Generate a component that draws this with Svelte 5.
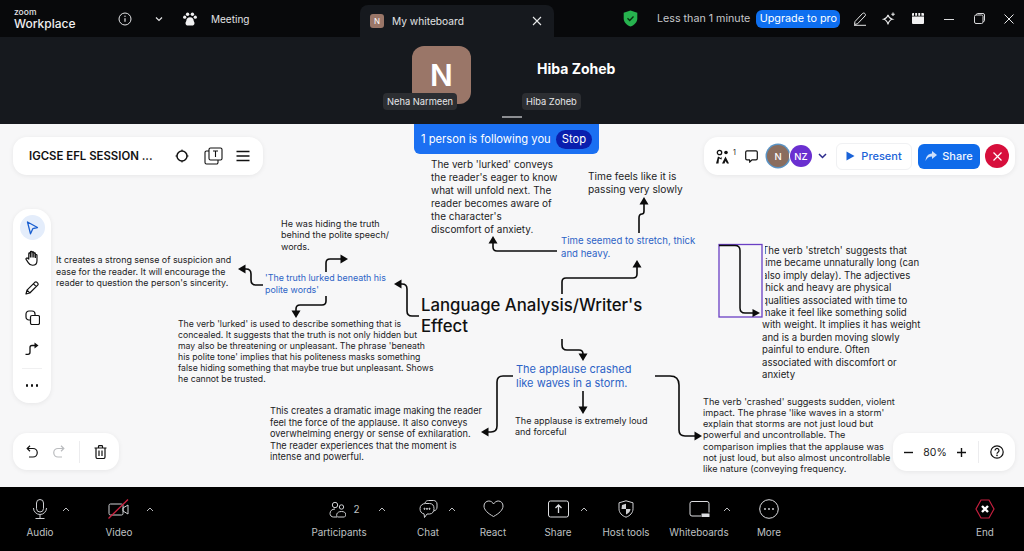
<script lang="ts">
  type Note = { x: number; y: number; size: number; lh: number; lines: string[]; blue?: boolean };

  // canvas notes: y is relative to the top of the whiteboard
  const notes: Note[] = [
    { x: 431, y: 34, size: 9.95, lh: 13, lines: ["The verb 'lurked' conveys", "the reader's eager to know", "what will unfold next. The", "reader becomes aware of", "the character's", "discomfort of anxiety."] },
    { x: 588, y: 46, size: 10.2, lh: 12.6, lines: ["Time feels like it is", "passing very slowly"] },
    { x: 561, y: 111, size: 9.6, lh: 12.6, blue: true, lines: ["Time seemed to stretch, thick", "and heavy."] },
    { x: 281, y: 94, size: 9, lh: 11.3, lines: ["He was hiding the truth", "behind the polite speech/", "words."] },
    { x: 56, y: 130, size: 8.9, lh: 11.5, lines: ["It creates a strong sense of suspicion and", "ease for the reader. It will encourage the", "reader to question the person's sincerity."] },
    { x: 265, y: 148, size: 8.9, lh: 12, blue: true, lines: ["'The truth lurked beneath his", "polite words'"] },
    { x: 178, y: 195, size: 8.7, lh: 11.1, lines: ["The verb 'lurked' is used to describe something that is", "concealed. It suggests that the truth is not only hidden but", "may also be threatening or unpleasant. The phrase 'beneath", "his polite tone' implies that his politeness masks something", "false hiding something that maybe true but unpleasant. Shows", "he cannot be trusted."] },
    { x: 516, y: 238, size: 11, lh: 14, blue: true, lines: ["The applause crashed", "like waves in a storm."] },
    { x: 515, y: 291, size: 9, lh: 11.3, lines: ["The applause is extremely loud", "and forceful"] },
    { x: 270, y: 281, size: 9.2, lh: 11.5, lines: ["This creates a dramatic image making the reader", "feel the force of the applause. It also conveys", "overwhelming energy or sense of exhilaration.", "The reader experiences that the moment is", "intense and powerful."] },
    { x: 703, y: 272, size: 9.15, lh: 11.15, lines: ["The verb 'crashed' suggests sudden, violent", "impact. The phrase 'like waves in a storm'", "explain that storms are not just loud but", "powerful and uncontrollable. The", "comparison implies that the applause was", "not just loud, but also almost uncontrollable", "like nature (conveying frequency."] },
    { x: 762, y: 121, size: 9.65, lh: 12.4, lines: ["The verb 'stretch' suggests that", "time became unnaturally long (can", "also imply delay). The adjectives", "thick and heavy are physical", "qualities associated with time to", "make it feel like something solid", "with weight. It implies it has weight", "and is a burden moving slowly", "painful to endure. Often", "associated with discomfort or", "anxiety"] },
  ];

  // arrows in page coordinates, tip is drawn separately as [x, y, direction]
  const arrows: string[] = [
    "M562 294V282Q562 278 566 278H633Q637 278 637 274V264",
    "M639 233V218Q639 214 642 214Q644 214 644 211V202",
    "M557 251H497Q493 251 493 247V241",
    "M419 316H412Q407 316 407 311V289Q407 284 402 284H398",
    "M562 339V345Q562 350 567 350H579Q583 350 583 354V356",
    "M513 376H503Q497 376 497 382V426Q497 432 491 432H486",
    "M583 391V409",
    "M655 376H670Q679 376 679 385V430Q679 436 685 436H697",
    "M263 285H256Q251 285 251 280V274Q251 269 246 269H243",
    "M326 272V263Q326 259 330 259H343",
    "M326 296V301Q326 305 322 305H300Q296 305 296 309V313",
  ];
  const tips: [number, number, number][] = [
    [637, 260, 0], [644, 197, 0], [493, 236, 0], [394, 284, -90], [583, 361, 180],
    [481, 432, -90], [583, 414, 180], [702, 436, 90], [238, 269, -90], [348, 259, 90], [296, 318, 180],
  ];

  const railTools = ["select", "hand", "pen", "shapes", "connector"];
</script>

<div class="app">
  <header class="titlebar">
    <div class="title-left">
      <div class="logo"><span class="logo-zoom">zoom</span><span class="logo-name">Workplace</span></div>
      <svg class="i-info" width="14" height="14" viewBox="0 0 14 14" fill="none" stroke="#e4e5e7" stroke-width="1"><circle cx="7" cy="7" r="6" /><path d="M7 6.2v3.6" stroke-width="1.2" /><circle cx="7" cy="4.2" r=".7" fill="#e4e5e7" stroke="none" /></svg>
      <svg class="i-chev" width="8" height="6" viewBox="0 0 8 6" fill="none" stroke="#e4e5e7" stroke-width="1.2"><path d="M1 1.5l3 3 3-3" /></svg>
      <svg class="i-paw" width="14" height="14" viewBox="0 0 14 14" fill="#f1f1f2"><circle cx="4.6" cy="2.2" r="1.7" /><circle cx="9.4" cy="2.2" r="1.7" /><circle cx="1.7" cy="5.2" r="1.6" /><circle cx="12.3" cy="5.2" r="1.6" /><path d="M7 5.2c2.2 0 3.6 1.5 3.6 3.4 0 .8.9 1.4.9 2.6 0 1.5-1.2 2.3-2.5 2.3H5c-1.3 0-2.5-.8-2.5-2.3 0-1.2.9-1.8.9-2.6 0-1.9 1.4-3.4 3.6-3.4z" /></svg>
      <span class="meeting">Meeting</span>
    </div>
    <div class="tab">
      <span class="tab-badge">N</span>
      <span class="tab-name">My whiteboard</span>
      <svg class="tab-x" width="10" height="10" viewBox="0 0 10 10" stroke="#e8e9ea" stroke-width="1.1"><path d="M1 1l8 8M9 1l-8 8" /></svg>
    </div>
    <div class="title-right">
      <svg class="i-shield" width="15" height="17" viewBox="0 0 15 17"><path d="M7.5 0.5l6.8 2.3v5.4c0 4-2.8 6.9-6.8 8.3C3.500 15.100.7 12.200.7 8.200V2.800z" fill="#27b34f" /><path d="M4.500 8.300l2.200 2.200 3.800-4" fill="none" stroke="#07300f" stroke-width="1.300" /></svg>
      <span class="timer">Less than 1 minute</span>
      <span class="upgrade">Upgrade to pro</span>
      <svg class="i-edit" width="14" height="14" viewBox="0 0 14 14" fill="none" stroke="#e8e9ea" stroke-width="1"><path d="M2 9.500L9.500 1.500c.8-.7 1.800-.5 2.400.1s.8 1.600.1 2.400L4.500 11.800l-3 .7zM1 13.300h12" /></svg>
      <svg class="i-spark" width="14" height="14" viewBox="0 0 14 14" fill="none" stroke="#e8e9ea" stroke-width="1.100"><path d="M6 2.800c.6 2.500 1.700 3.700 4.400 4.400C7.700 7.900 6.600 9.200 6 12.500 5.400 9.200 4.300 7.900 1.600 7.200 4.300 6.500 5.400 5.300 6 2.800z" /><path d="M11 .5v3.600M9.300 2.300h3.500" /></svg>
      <svg class="i-clap" width="12" height="11" viewBox="0 0 12 11" fill="#f1f1f2"><path d="M0 3.500h12V10a1 1 0 0 1-1 1H1a1 1 0 0 1-1-1zM0 1a1 1 0 0 1 1-1h1v2.800H0zM3.200 0h1.900v2.800H3.200zM6.300 0h1.900v2.800H6.300zM9.400 0H11a1 1 0 0 1 1 1v1.800H9.400z" /></svg>
      <svg class="i-min" width="10" height="10" viewBox="0 0 10 10" stroke="#d8d9db"><path d="M0 5.500h10" /></svg>
      <svg class="i-max" width="11" height="11" viewBox="0 0 11 11" fill="none" stroke="#d8d9db"><rect x=".5" y="2" width="8.500" height="8.500" rx="1.500" /><path d="M2.500 2V1.500A1 1 0 0 1 3.500.5H9A1.500 1.500 0 0 1 10.500 2v5.500a1 1 0 0 1-1 1H9" /></svg>
      <svg class="i-close" width="10" height="10" viewBox="0 0 10 10" stroke="#e8e9ea"><path d="M.5.500l9 9M9.500.500l-9 9" /></svg>
    </div>
  </header>

  <section class="strip">
    <div class="tile tile-neha">
      <div class="avatar">N</div>
      <span class="tile-label">Neha Narmeen</span>
    </div>
    <div class="tile tile-hiba">
      <div class="tile-name">Hiba Zoheb</div>
      <span class="tile-label">Hiba Zoheb</span>
    </div>
    <span class="grip"></span>
  </section>

  <main class="board">
    {#each notes as note}
      <div class="note" class:blue={note.blue} style="left:{note.x}px;top:{note.y}px;font-size:{note.size}px;line-height:{note.lh}px">
        {#each note.lines as line}<div>{line}</div>{/each}
      </div>
    {/each}
    <h1 class="topic">Language Analysis/Writer's<br />Effect</h1>

    <svg class="ink" viewBox="0 124 1024 363" width="1024" height="363" fill="none">
      {#each arrows as d}
        <path {d} stroke="#0b0b0b" stroke-width="1.600" />
      {/each}
      {#each tips as [x, y, deg]}
        <path d="M0 0L4.500 7.500H-4.500Z" fill="#0b0b0b" transform="translate({x} {y}) rotate({deg})" />
      {/each}
      <!-- selected connector covers the start of the note next to it -->
      <rect x="719" y="244" width="46" height="73" fill="#f7f7f8" />
      <rect x="719" y="244.500" width="43" height="72.500" stroke="#6a3fc4" stroke-width="1.300" fill="#f7f7f8" />
      <path d="M719 245.500H735Q740 245.500 740 250.500V308Q740 313 745 313H754" stroke="#0b0b0b" stroke-width="1.500" />
      <path d="M760 313L752.500 309V317Z" fill="#0b0b0b" />
    </svg>

    <div class="following">
      <span>1 person is following you</span>
      <span class="stop">Stop</span>
    </div>

    <div class="panel panel-title">
      <span class="board-name">IGCSE EFL SESSION ...</span>
      <svg width="14" height="14" viewBox="0 0 14 14" fill="none" stroke="#111" stroke-width="1.500"><circle cx="7" cy="7" r="5" /><path d="M7 .5V2M7 12v1.500M.5 7H2M12 7h1.500" stroke-width="1" /></svg>
      <svg width="19" height="18" viewBox="0 0 19 18" fill="none" stroke="#111" stroke-width="1.100"><rect x="5" y="1" width="13" height="12" rx="1.500" /><path d="M5 4H2.500A1.500 1.500 0 0 0 1 5.500V15.500A1.500 1.500 0 0 0 2.500 17H12.500A1.500 1.500 0 0 0 14 15.500V13" /><path d="M9 4h5M11.500 4v6" /></svg>
      <svg width="14" height="12" viewBox="0 0 14 12" stroke="#111" stroke-width="1.300"><path d="M.5 1.500h13M.5 6h13M.5 10.500h13" /></svg>
    </div>

    <nav class="panel rail">
      {#each railTools as tool}
        <span class="rail-btn" class:on={tool === "select"}>
          {#if tool === "select"}
            <svg width="13" height="14" viewBox="0 0 13 14" fill="none" stroke="#1a5fd0" stroke-width="1.300"><path d="M1.500 1l10 5.500-4.700 1.200L4.500 12.800z" stroke-linejoin="round" /></svg>
          {:else if tool === "hand"}
            <svg width="15" height="16" viewBox="0 0 14 15" fill="none" stroke="#111" stroke-width="1.100" stroke-linejoin="round"><path d="M3.500 8.500V3.500c0-1 1.500-1 1.500 0V2c0-1 1.600-1 1.600 0v.5c0-1 1.600-1 1.600 0v1c0-1 1.500-1 1.500 0V5c0-.8 1.500-.8 1.500 0v5c0 2.800-1.800 4.300-4.200 4.300-2 0-3-.8-4-2.500L1 8.800c-.5-1 .8-1.800 1.500-1z" /><path d="M5 3.500V7M6.600 2.500V7M8.200 3.500V7M9.700 5v2.500" /></svg>
          {:else if tool === "pen"}
            <svg width="14" height="14" viewBox="0 0 14 14" fill="none" stroke="#111" stroke-width="1.200" stroke-linejoin="round"><path d="M1 13l1-3.800L9.800 1.300c.7-.6 1.600-.5 2.200.1l.7.7c.6.6.6 1.500 0 2.100L4.800 12zM8.500 2.800l2.800 2.800M2 9.200L4.800 12" /></svg>
          {:else if tool === "shapes"}
            <svg width="15" height="15" viewBox="0 0 15 15" fill="none" stroke="#111" stroke-width="1.200"><rect x="1" y="1" width="9" height="9" rx="3" /><rect x="5.500" y="5.500" width="9" height="9" rx="1.500" fill="#fff" /></svg>
          {:else}
            <svg width="14" height="14" viewBox="0 0 14 14" fill="none" stroke="#111" stroke-width="1.300"><path d="M.5 13.300H3Q5 13.300 5 11.300V6.500Q5 4.500 7 4.500H10" /><path d="M9.500 1.500l4 3-4 3z" fill="#111" stroke="none" /></svg>
          {/if}
        </span>
      {/each}
      <span class="rail-rule"></span>
      <span class="rail-more"><i></i><i></i><i></i></span>
    </nav>

    <div class="panel panel-undo">
      <svg width="12" height="13" viewBox="0 0 12 13" fill="none" stroke="#111" stroke-width="1.200"><path d="M4 .8L1.200 3.500 4 6.200M1.500 3.500H7a4 4 0 0 1 0 8.500H3" /></svg>
      <svg class="redo" width="12" height="13" viewBox="0 0 12 13" fill="none" stroke="#b9bbbe" stroke-width="1.200"><path d="M8 .8l2.800 2.700L8 6.200M10.500 3.500H5a4 4 0 0 0 0 8.500h4" /></svg>
      <span class="rule"></span>
      <svg width="13" height="14" viewBox="0 0 13 14" fill="none" stroke="#111" stroke-width="1.200"><path d="M.5 3h12M4.500 3V1.500a.8.8 0 0 1 .8-.8h2.400a.8.8 0 0 1 .8.8V3M2 3v9a1.500 1.500 0 0 0 1.500 1.500h6A1.500 1.500 0 0 0 11 12V3M5 5.500v5.500M8 5.500v5.500" /></svg>
    </div>

    <div class="panel panel-right">
      <span class="follow">
        <svg width="17" height="15" viewBox="0 0 15 15" fill="#111"><circle cx="4.500" cy="3.500" r="2.200" fill="none" stroke="#111" stroke-width="1.300" /><circle cx="11" cy="3.500" r="1.800" /><path d="M1 14.500L3 7.500l3 1.500 1-1.500-.5 3L4 9.500l-.5 5zM7 14.500l3.500-7 3.500 7h-2l-1.500-2.500-1 2.500z" /></svg>
        <sup>1</sup>
      </span>
      <svg class="comment" width="13" height="13" viewBox="0 0 13 13" fill="none" stroke="#111" stroke-width="1.200"><path d="M2 .8h9A1.300 1.300 0 0 1 12.300 2v6.500A1.300 1.300 0 0 1 11 9.800H7L4.800 12 4.500 9.800H2A1.300 1.300 0 0 1 .7 8.500V2A1.300 1.300 0 0 1 2 .8z" /></svg>
      <span class="face face-n">N</span>
      <span class="face face-nz">NZ</span>
      <svg class="face-chev" width="9" height="6" viewBox="0 0 9 6" fill="none" stroke="#2b2a8c" stroke-width="1.500"><path d="M1 1l3.500 3.500L8 1" /></svg>
      <span class="btn-present"><svg width="9" height="10" viewBox="0 0 9 10" fill="#1a63d8"><path d="M.5.500L8.500 5 .5 9.500z" /></svg>Present</span>
      <span class="btn-share"><svg width="12" height="10" viewBox="0 0 12 10" fill="#cfe0fb"><path d="M7 0l5 4-5 4V5.500C4 5.500 2 6.700.5 10 .8 5.500 3 2.800 7 2.500z" /></svg>Share</span>
      <span class="btn-leave"><svg width="9" height="9" viewBox="0 0 9 9" stroke="#fff" stroke-width="1.200"><path d="M.5.500l8 8M8.500.500l-8 8" /></svg></span>
    </div>

    <div class="panel panel-zoom">
      <svg width="9" height="9" viewBox="0 0 9 9" stroke="#111" stroke-width="1.400"><path d="M0 4.500h9" /></svg>
      <span class="pct">80%</span>
      <svg width="9" height="9" viewBox="0 0 9 9" stroke="#111" stroke-width="1.400"><path d="M0 4.500h9M4.500 0v9" /></svg>
      <span class="rule"></span>
      <svg width="14" height="14" viewBox="0 0 14 14" fill="none" stroke="#111" stroke-width="1.200"><circle cx="7" cy="7" r="6.200" /><path d="M5 5.400a2 2 0 1 1 3 1.800c-.7.400-1 .8-1 1.500" /><circle cx="7" cy="10.400" r=".8" fill="#111" stroke="none" /></svg>
    </div>
  </main>

  <footer class="toolbar">
    <div class="tool w-audio">
      <svg width="18" height="20" viewBox="0 0 18 20" fill="none" stroke="#cfd0d3" stroke-width="1"><rect x="5.500" y=".5" width="7" height="12.500" rx="3.500" /><path d="M2.500 9a6.500 6.500 0 0 0 13 0M9 15.500v3.500M4.500 19.500h9" /></svg>
      <span>Audio</span>
      <svg class="caret" style="left:62px" width="8" height="5" viewBox="0 0 8 5" fill="none" stroke="#bcbdc0"><path d="M1 4l3-3 3 3" /></svg>
    </div>
    <div class="tool w-video">
      <svg width="22" height="20" viewBox="0 0 22 20" fill="none" stroke="#cfd0d3" stroke-width="1"><rect x="1" y="5" width="14" height="11" rx="1.500" /><path d="M15 9l5-3v9l-5-3z" /><path d="M.5 19.500L20 .5" stroke="#cf2140" stroke-width="1.300" /></svg>
      <span>Video</span>
      <svg class="caret" style="left:66px" width="8" height="5" viewBox="0 0 8 5" fill="none" stroke="#bcbdc0"><path d="M1 4l3-3 3 3" /></svg>
    </div>
    <div class="tool w-people">
      <span class="icon-count">
        <svg width="17" height="17" viewBox="0 0 17 17" fill="none" stroke="#cfd0d3" stroke-width="1"><circle cx="6" cy="4" r="2.700" /><circle cx="12.500" cy="6" r="2.200" /><path d="M6 8C3 8 1 10 1 12.500 1 14.500 2.500 16 4.500 16H8M8.500 16c-1.500-1-1.500-5.500 4-5.500S17 15 15.500 16z" /></svg>
        <em>2</em>
      </span>
      <span>Participants</span>
      <svg class="caret" style="left:89px" width="8" height="5" viewBox="0 0 8 5" fill="none" stroke="#bcbdc0"><path d="M1 4l3-3 3 3" /></svg>
    </div>
    <div class="tool w-chat">
      <svg width="19" height="19" viewBox="0 0 19 19" fill="none" stroke="#cfd0d3" stroke-width="1"><path d="M6 3.500C6.500 1.800 8 1 9.500 1h5C16.500 1 18 2.500 18 4.500v3c0 2-1 3.500-3 3.800" /><path d="M6.500 4h4c3 0 4.500 2 4.500 5s-1.500 5.500-4.500 5.500H8L5.500 18l-.4-3.600C2.500 14 1 12 1 9c0-3 2.500-5 5.500-5z" /><circle cx="5.500" cy="9.300" r=".6" fill="#cfd0d3" /><circle cx="8" cy="9.300" r=".6" fill="#cfd0d3" /><circle cx="10.500" cy="9.300" r=".6" fill="#cfd0d3" /></svg>
      <span>Chat</span>
      <svg class="caret" style="left:59px" width="8" height="5" viewBox="0 0 8 5" fill="none" stroke="#bcbdc0"><path d="M1 4l3-3 3 3" /></svg>
    </div>
    <div class="tool w-react">
      <svg width="21" height="18" viewBox="0 0 21 18" fill="none" stroke="#cfd0d3" stroke-width="1"><path d="M10.500 16.500C5 13.500 1 10 1 6c0-3 2.200-5 4.800-5 2 0 3.700 1 4.700 3 1.300-2 3-3 4.800-3 2.700 0 4.700 2 4.700 5 0 4-4 7.500-9.500 10.500z" /></svg>
      <span>React</span>
    </div>
    <div class="tool w-share">
      <svg width="21" height="17" viewBox="0 0 21 17" fill="none" stroke="#dcdde0" stroke-width="1"><rect x=".5" y=".5" width="20" height="16" rx="2" /><path d="M10.500 12.500v-8M7.500 7.500l3-3 3 3" stroke-width="1.300" /></svg>
      <span>Share</span>
      <svg class="caret" style="left:61px" width="8" height="5" viewBox="0 0 8 5" fill="none" stroke="#bcbdc0"><path d="M1 4l3-3 3 3" /></svg>
    </div>
    <div class="tool w-host">
      <svg width="16" height="18" viewBox="0 0 16 18" fill="none" stroke="#cfd0d3" stroke-width="1"><path d="M8 .8l7 2v6c0 4-3 7-7 8.400C4 15.800 1 12.800 1 8.800v-6z" /><path d="M4 5l4-1.300V9H3.500zM8 9h4.500c0 2.500-2 4.500-4.500 5.500z" fill="#cfd0d3" stroke="none" /></svg>
      <span>Host tools</span>
    </div>
    <div class="tool w-boards">
      <svg width="21" height="17" viewBox="0 0 21 17" fill="none" stroke="#dcdde0" stroke-width="1"><path d="M12 15.500H3A2 2 0 0 1 1 13.500V3A2 2 0 0 1 3 1h15a2 2 0 0 1 2 2v9" /><rect x="12.500" y="13" width="8" height="3.500" fill="#dcdde0" stroke="none" /></svg>
      <span>Whiteboards</span>
      <svg class="caret" style="left:68px" width="8" height="5" viewBox="0 0 8 5" fill="none" stroke="#bcbdc0"><path d="M1 4l3-3 3 3" /></svg>
    </div>
    <div class="tool w-more">
      <svg width="20" height="20" viewBox="0 0 20 20" fill="none" stroke="#dcdde0" stroke-width="1"><circle cx="10" cy="10" r="9.300" /><g fill="#dcdde0" stroke="none"><circle cx="6" cy="10" r=".9" /><circle cx="10" cy="10" r=".9" /><circle cx="14" cy="10" r=".9" /></g></svg>
      <span>More</span>
    </div>
    <div class="tool w-end">
      <svg width="20" height="20" viewBox="0 0 20 20"><path d="M6 1h8l5 9-5 9H6l-5-9z" fill="none" stroke="#c41f3e" stroke-width="1.200" /><path d="M7 7l6 6M13 7l-6 6" stroke="#fff" stroke-width="2.400" /></svg>
      <span>End</span>
    </div>
  </footer>
</div>

<style>
  :global(body) {
    margin: 0;
    background: #000;
  }

  .app {
    width: 1024px;
    height: 551px;
    display: flex;
    flex-direction: column;
    overflow: hidden;
    font-family: Inter, "Liberation Sans", sans-serif;
    color: #111;
  }

  /* title bar */
  .titlebar {
    height: 37px;
    flex: none;
    display: flex;
    background: #08090b;
    color: #e2e3e5;
    font-size: 11px;
  }

  .title-left {
    width: 360px;
    display: flex;
    align-items: center;
    padding-left: 14px;
    box-sizing: border-box;
  }

  .logo {
    width: 104px;
    display: flex;
    flex-direction: column;
    line-height: 1;
  }

  .logo-zoom {
    font-size: 8.500px;
    height: 8px;
    margin-top: 1px;
    font-weight: 500;
  }

  .logo-name {
    font-size: 12px;
    margin-top: 2px;
    font-weight: 500;
    color: #f0f0f1;
  }

  .i-chev {
    margin-left: 23px;
  }

  .i-paw {
    margin-left: 20px;
  }

  .meeting {
    margin-left: 14px;
    font-size: 10px;
  }

  .tab {
    width: 194px;
    height: 32px;
    margin-top: 5px;
    display: flex;
    align-items: center;
    padding: 0 12px 0 10px;
    box-sizing: border-box;
    background: #16191e;
    border-radius: 8px 8px 0 0;
  }

  .tab-badge {
    width: 14px;
    height: 14px;
    background: #9a7668;
    border-radius: 3px;
    font-size: 8px;
    display: flex;
    align-items: center;
    justify-content: center;
    color: #fff;
  }

  .tab-name {
    margin-left: 8px;
    font-size: 10.200px;
  }

  .tab-x {
    margin-left: auto;
  }

  .title-right {
    flex: 1;
    display: flex;
    align-items: center;
    height: 37px;
    padding-left: 69px;
  }

  .timer {
    margin-left: 19px;
    color: #c6c7ca;
    font-size: 10.700px;
  }

  .upgrade {
    margin-left: 6px;
    width: 84px;
    height: 18px;
    line-height: 18px;
    text-align: center;
    background: #0e6ff0;
    color: #fff;
    border-radius: 6px;
    font-size: 10.800px;
  }

  .i-edit {
    margin-left: 13px;
  }

  .i-spark {
    margin-left: 15px;
  }

  .i-clap {
    margin-left: 16px;
  }

  .i-min {
    margin-left: 20px;
  }

  .i-max {
    margin-left: 20px;
  }

  .i-close {
    margin-left: 19px;
  }

  /* video strip */
  .strip {
    height: 87px;
    flex: none;
    display: flex;
    justify-content: center;
    padding-right: 6px;
    background: #16191e;
    position: relative;
  }

  .tile {
    width: 135px;
    position: relative;
    color: #fff;
  }

  .avatar {
    width: 59px;
    height: 58px;
    margin: 9px 0 0 38px;
    background: #9a7668;
    border-radius: 12px;
    display: flex;
    align-items: center;
    justify-content: center;
    font-size: 30px;
    font-weight: 600;
  }

  .tile-name {
    margin: 23px 0 0 28px;
    font-size: 14px;
    font-weight: 700;
    line-height: 18px;
  }

  .tile-label {
    position: absolute;
    top: 56px;
    height: 17px;
    line-height: 17px;
    padding: 0 4px;
    background: #2c2e32;
    border-radius: 4px;
    font-size: 9.300px;
    color: #e6e6e8;
    white-space: nowrap;
  }

  .tile-neha .tile-label {
    left: 9px;
  }

  .tile-hiba .tile-label {
    left: 13px;
  }

  .grip {
    position: absolute;
    left: 502px;
    top: 79px;
    width: 20px;
    height: 1.500px;
    background: #8c8e92;
  }

  /* whiteboard */
  .board {
    flex: 1;
    position: relative;
    background: #f7f7f8;
    overflow: hidden;
  }

  .note {
    position: absolute;
    white-space: nowrap;
    color: #1c1c1e;
  }

  .note.blue {
    color: #2d63c6;
  }

  .topic {
    position: absolute;
    left: 421px;
    top: 171px;
    margin: 0;
    font-size: 16.800px;
    line-height: 21px;
    font-weight: 500;
    white-space: nowrap;
  }

  .ink {
    position: absolute;
    left: 0;
    top: 0;
  }

  .following {
    position: absolute;
    left: 414px;
    top: 0;
    width: 185px;
    height: 30px;
    box-sizing: border-box;
    padding: 0 7px;
    display: flex;
    align-items: center;
    justify-content: space-between;
    background: #1b70f2;
    border-radius: 0 0 6px 6px;
    color: #fff;
    font-size: 11.200px;
    white-space: nowrap;
  }

  .stop {
    width: 36px;
    height: 19px;
    line-height: 19px;
    text-align: center;
    background: #0a1fae;
    border-radius: 10px;
  }

  .panel {
    position: absolute;
    background: #fff;
    border-radius: 14px;
    box-shadow: 0 1px 5px rgba(0, 0, 0, 0.07);
    display: flex;
    align-items: center;
    box-sizing: border-box;
  }

  .panel-title {
    left: 13px;
    top: 13px;
    width: 250px;
    height: 38px;
    padding-left: 16px;
  }

  .board-name {
    width: 146px;
    font-size: 11.400px;
    font-weight: 600;
    white-space: nowrap;
  }

  .panel-title svg:nth-of-type(2) {
    margin-left: 15px;
  }

  .panel-title svg:nth-of-type(3) {
    margin-left: 13px;
  }

  .rail {
    left: 13px;
    top: 85px;
    width: 38px;
    height: 194px;
    flex-direction: column;
    padding-top: 6px;
    border-radius: 16px;
  }

  .rail-btn {
    width: 25px;
    height: 25px;
    margin-bottom: 5px;
    display: flex;
    align-items: center;
    justify-content: center;
    border-radius: 50%;
  }

  .rail-btn.on {
    background: #e4edfb;
  }

  .rail-rule {
    width: 20px;
    height: 1px;
    background: #f0f0f1;
    margin-top: 3px;
  }

  .rail-more {
    margin-top: 15px;
    display: flex;
    gap: 2.500px;
  }

  .rail-more i {
    width: 2.500px;
    height: 2.500px;
    background: #111;
    border-radius: 50%;
  }

  .panel-undo {
    left: 13px;
    top: 309px;
    width: 106px;
    height: 37px;
    padding-left: 13px;
  }

  .redo {
    margin-left: 15px;
  }

  .rule {
    width: 1px;
    height: 22px;
    background: #ececee;
  }

  .panel-undo .rule {
    margin: 0 14px;
  }

  .panel-right {
    left: 704px;
    top: 13px;
    width: 311px;
    height: 38px;
    padding-left: 10px;
  }

  .follow {
    display: flex;
    width: 26px;
  }

  .follow sup {
    font-size: 7px;
    line-height: 8px;
    margin: 0 0 0 2px;
    align-self: flex-start;
    vertical-align: baseline;
  }

  .comment {
    margin-left: 5px;
  }

  .face {
    width: 22px;
    height: 22px;
    border-radius: 50%;
    display: flex;
    align-items: center;
    justify-content: center;
    color: #fff;
    font-size: 9.500px;
    font-weight: 500;
  }

  .face-n {
    margin-left: 9px;
    background: #8a6d5e;
    box-shadow: 0 0 0 1.500px #5a93c4;
  }

  .face-nz {
    margin-left: 1px;
    background: #6a2fd0;
    box-shadow: 0 0 0 1px #fff;
  }

  .face-chev {
    margin-left: 6px;
  }

  .btn-present {
    margin-left: 9px;
    width: 76px;
    height: 27px;
    display: flex;
    align-items: center;
    justify-content: center;
    gap: 6px;
    border: 1px solid #f0f1f3;
    border-radius: 6px;
    box-sizing: border-box;
    color: #1a63d8;
    font-size: 11px;
    font-weight: 500;
  }

  .btn-share {
    margin-left: 6px;
    width: 62px;
    height: 25px;
    display: flex;
    align-items: center;
    justify-content: center;
    gap: 5px;
    background: #0f6bea;
    border-radius: 6px;
    color: #f2f6fe;
    font-size: 11px;
    font-weight: 500;
  }

  .btn-leave {
    margin-left: 5px;
    width: 24px;
    height: 24px;
    display: flex;
    align-items: center;
    justify-content: center;
    background: #d70f3c;
    border-radius: 50%;
  }

  .panel-zoom {
    left: 893px;
    top: 309px;
    width: 122px;
    height: 38px;
    padding-left: 11px;
  }

  .pct {
    width: 44px;
    text-align: center;
    font-size: 10.500px;
    color: #222;
  }

  .panel-zoom .rule {
    margin: 0 11px 0 12px;
  }

  /* bottom toolbar */
  .toolbar {
    height: 64px;
    flex: none;
    display: flex;
    background: #000;
    color: #bfc0c3;
    font-size: 9.900px;
  }

  .tool {
    position: relative;
    display: flex;
    flex-direction: column;
    align-items: center;
    flex: none;
  }

  .tool > svg:first-child,
  .icon-count {
    height: 20px;
    margin-top: 12px;
    display: flex;
    align-items: center;
  }

  .icon-count {
    margin-left: 11px;
  }

  .tool > span:not(.icon-count) {
    position: absolute;
    top: 39px;
    line-height: 13px;
    white-space: nowrap;
  }

  .icon-count em {
    font-style: normal;
    margin-left: 7px;
    font-size: 10px;
  }

  .caret {
    position: absolute;
    top: 20px;
  }

  .w-audio {
    width: 80px;
  }

  .w-video {
    width: 78px;
  }

  .w-people {
    width: 100px;
    margin-left: 131px;
  }

  .w-chat {
    width: 78px;
  }

  .w-react {
    width: 52px;
  }

  .w-share {
    width: 78px;
  }

  .w-host {
    width: 58px;
  }

  .w-boards {
    width: 88px;
  }

  .w-more {
    width: 52px;
  }

  .w-end {
    width: 52px;
    margin-left: auto;
    margin-right: 13px;
  }
</style>
